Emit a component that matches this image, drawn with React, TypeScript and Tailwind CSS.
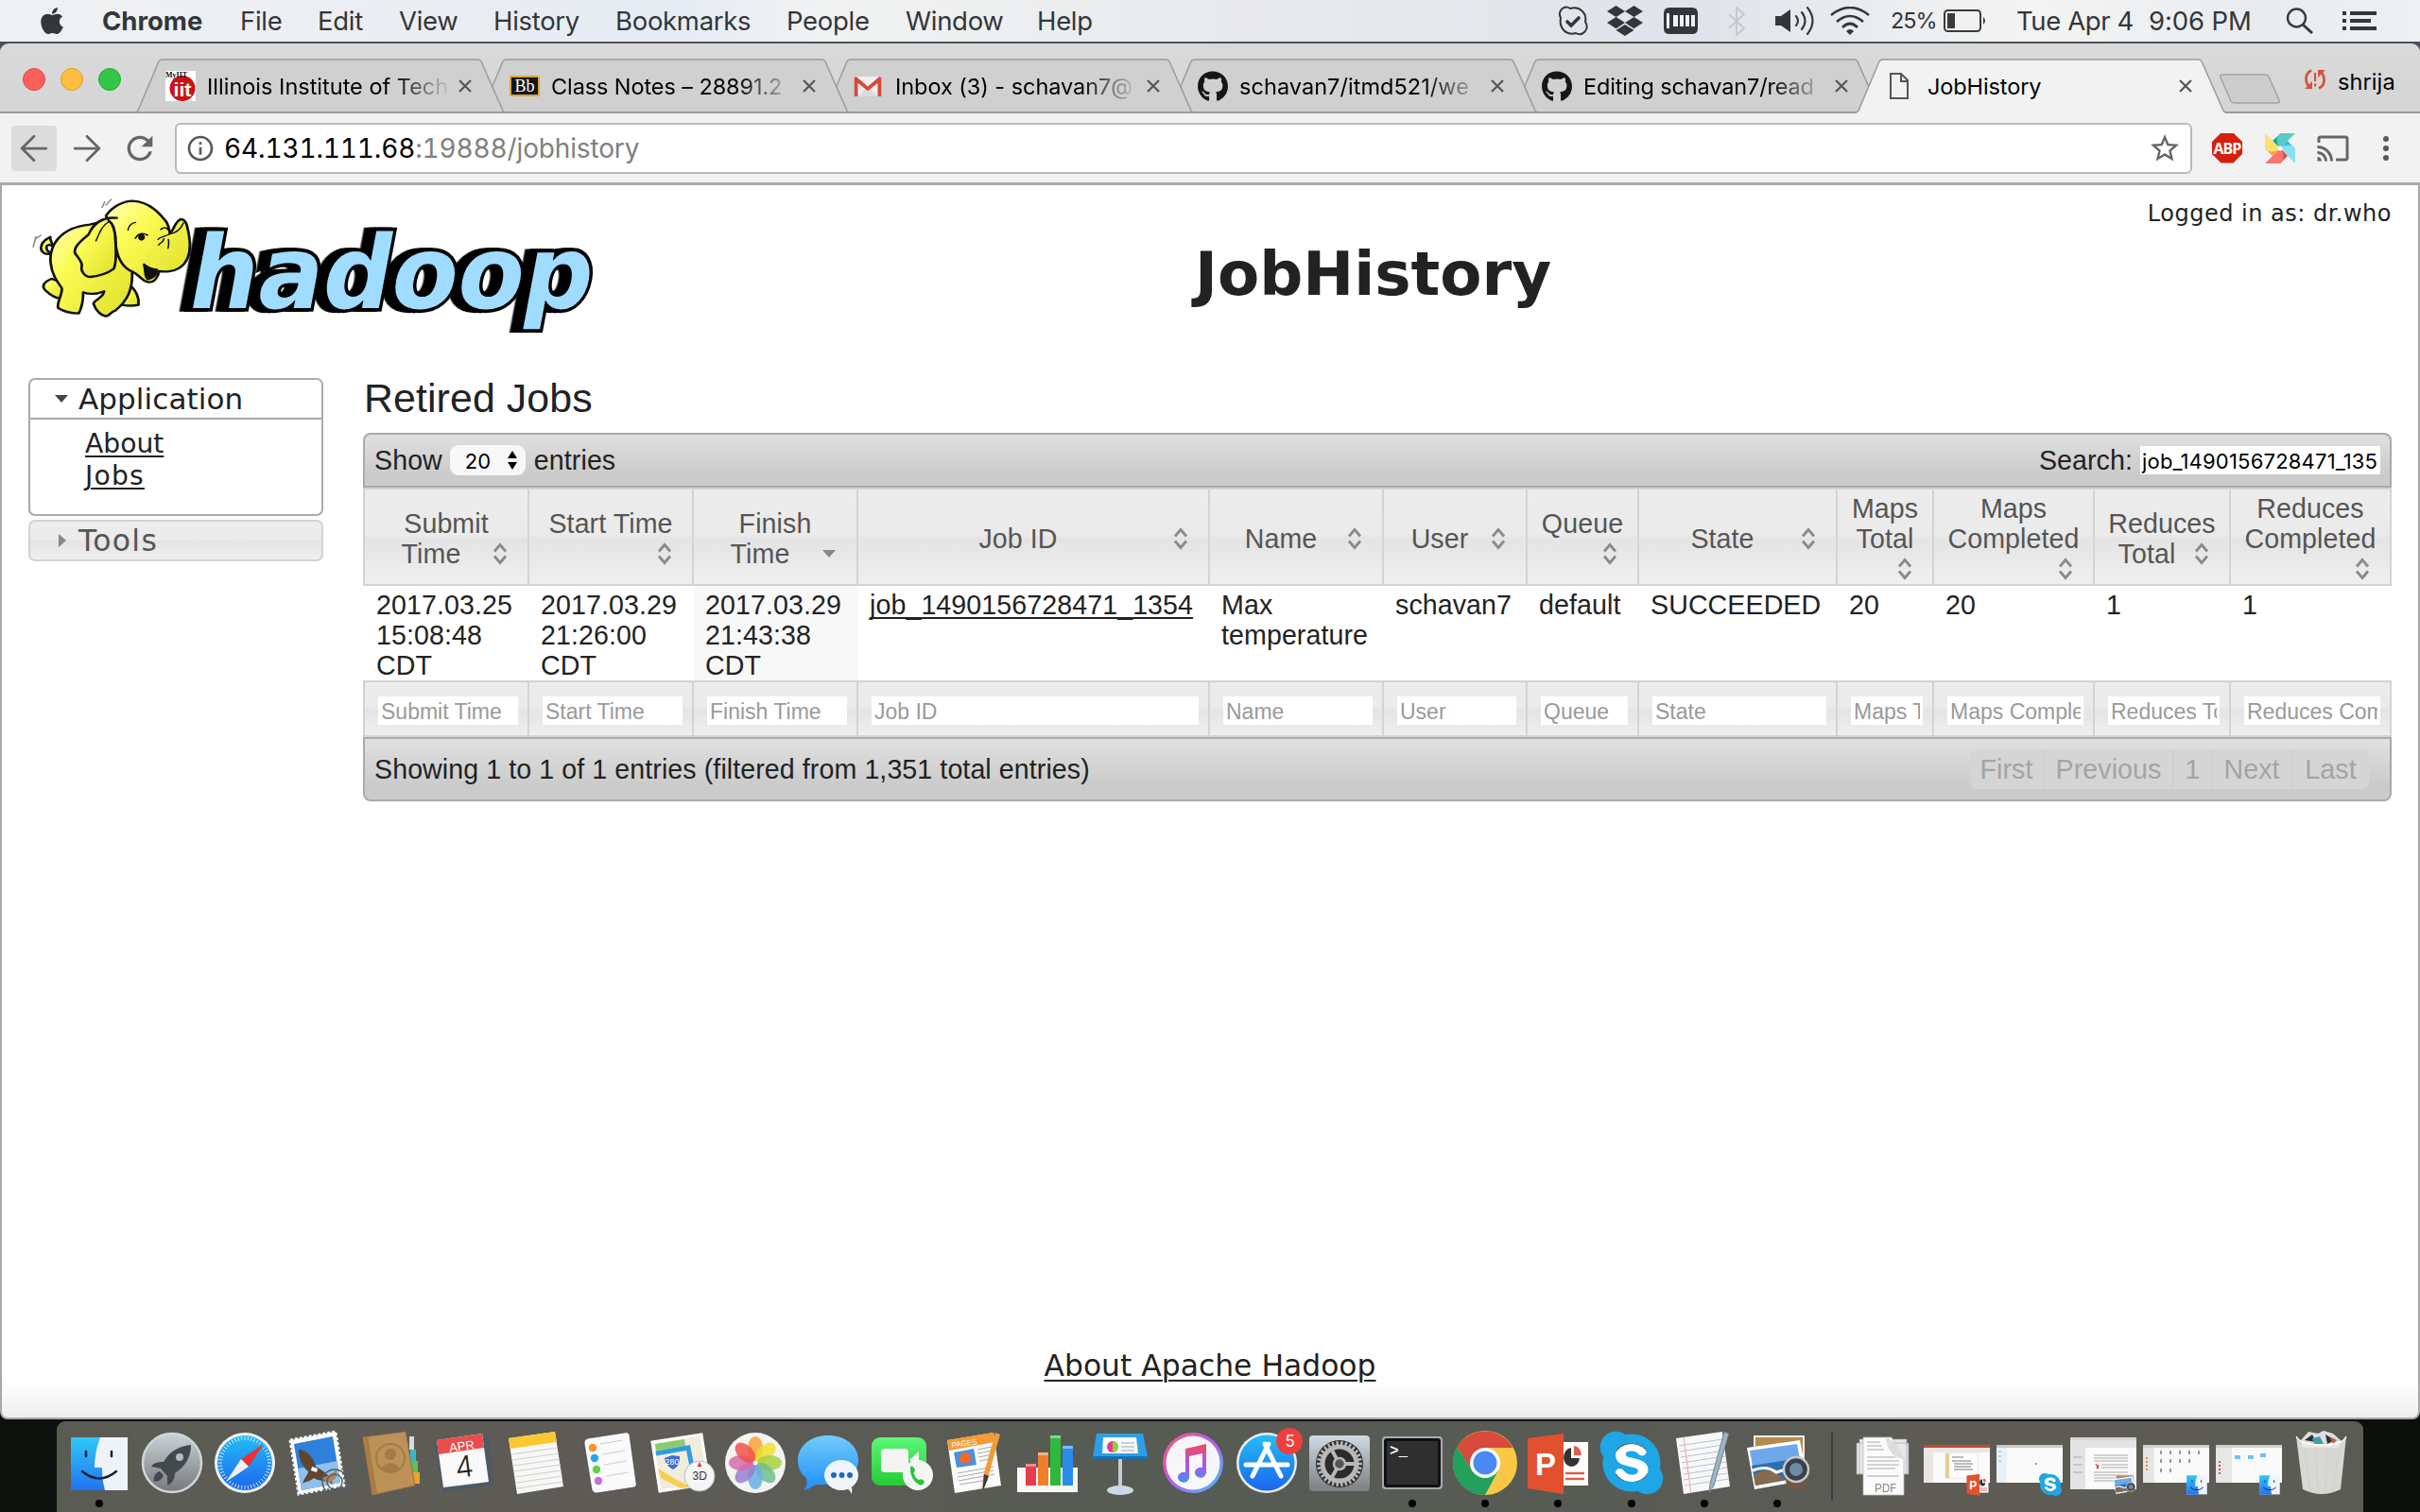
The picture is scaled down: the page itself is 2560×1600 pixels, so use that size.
import React from "react";
import { FaApple, FaDropbox, FaGithub, FaSkype } from "react-icons/fa";
import { MdCast, MdInfoOutline, MdRefresh, MdStarBorder } from "react-icons/md";
import { ArrowLeft, ArrowRight } from "lucide-react";

/* ---------- menu bar ---------- */

const menus: [string, string][] = [
  ["File", "w-[82px]"],
  ["Edit", "w-[86px]"],
  ["View", "w-[100px]"],
  ["History", "w-[129px]"],
  ["Bookmarks", "w-[181px]"],
  ["People", "w-[126px]"],
  ["Window", "w-[139px]"],
  ["Help", "w-[100px]"],
];

function MenuBar() {
  return (
    <header className="flex h-[44px] items-center bg-[linear-gradient(90deg,#f0f1f2_0%,#e9edf2_20%,#e6ecf4_28%,#f1f2f2_34%,#e9eaec_50%,#dfe4ea_70%,#f4f4f3_84%,#e9ecef_93%,#eef1f3_100%)] font-['Inter',sans-serif] text-[27.5px] leading-[44px] tracking-[-0.3px] text-[#33363a]">
      <FaApple className="ml-[40px] h-[32px] w-[30px]" />
      <div className="ml-[38px] w-[146px] font-bold tracking-[0px]">Chrome</div>
      {menus.map(([m, w]) => (
        <div key={m} className={w}>{m}</div>
      ))}
      <div className="ml-auto flex items-center">
        <svg viewBox="0 0 32 32" className="h-[32px] w-[32px]" fill="none" stroke="#33363a" strokeWidth="2">
          <path d="M3 13 C-1 5 7 -1 13 3 C23 0 31 8 29 17 C34 25 26 33 19 29 C9 32 1 24 3 13Z" />
          <path d="M10 17 l4 4 8 -8" strokeWidth="3.6" strokeLinecap="round" />
        </svg>
        <FaDropbox className="ml-[20px] h-[38px] w-[38px]" />
        <svg viewBox="0 0 36 28" className="ml-[22px] h-[28px] w-[36px]">
          <path d="M6 0 H30 Q36 0 36 6 V22 Q36 28 30 28 H6 Q0 28 0 22 V6 Q0 0 6 0Z" fill="#33363a" />
          <path d="M3 6 h3 v16 h-3z M10 8 h5 v12 h-5z M17 8 h4 v12 h-4z M23 8 h4 v12 h-4z M29 8 h4 v12 h-4z" fill="#eef0f2" />
        </svg>
        <svg viewBox="0 0 18 31" className="ml-[32px] h-[31px] w-[18px]" fill="none" stroke="#c3c7cb" strokeWidth="1.8">
          <path d="M1 8 L17 23 L9 30 V1 L17 8 L1 23" />
        </svg>
        <svg viewBox="0 0 42 32" className="ml-[32px] h-[32px] w-[42px]" fill="none" stroke="#33363a" strokeWidth="2.1" strokeLinecap="round">
          <path d="M0 11 h6 l10 -7 v24 l-10 -7 h-6z" fill="#33363a" stroke="none" />
          <path d="M22 11 q4 5 0 10 M28 7 q7 9 0 18 M34 2 q11 14 0 28" />
        </svg>
        <svg viewBox="0 0 42 30" className="ml-[16px] h-[30px] w-[42px]" fill="none" stroke="#33363a" strokeWidth="2.6">
          <path d="M1 9 Q21 -7 41 9 M7 16 Q21 4 35 16 M13 22 Q21 14 29 22" />
          <path d="M17 26 q4 -4 8 0 l-4 4z" fill="#33363a" stroke="none" />
        </svg>
        <span className="ml-[22px] w-[56px] text-[23.5px] tracking-[-1.1px]">25%</span>
        <svg viewBox="0 0 46 24" className="h-[24px] w-[46px]" fill="none" stroke="#3a3a3a" strokeWidth="2">
          <rect x="1" y="1" width="38" height="22" rx="3.5" />
          <path d="M42 8 q4 4 0 8z" fill="#3a3a3a" stroke="none" />
          <rect x="4" y="4" width="8" height="16" fill="#3a3a3a" stroke="none" />
        </svg>
        <span className="ml-[31px] w-[140px] tracking-[-0.4px]">Tue Apr 4</span>
        <span className="w-[145px] tracking-[-0.1px]">9:06 PM</span>
        <svg viewBox="0 0 30 28" className="h-[28px] w-[30px]" fill="none" stroke="#3a3a3a" strokeWidth="2.4">
          <circle cx="11.5" cy="11" r="9.5" />
          <path d="M18 18 L28 27" strokeWidth="3" />
        </svg>
        <svg viewBox="0 0 36 20" className="mr-[46px] ml-[30px] h-[20px] w-[36px]" fill="#33363a">
          <path d="M0 0h4v4h-4z M8 0h28v4h-28z M0 8h4v4h-4z M8 8h22v4h-22z M0 16h4v4h-4z M8 16h28v4h-28z" />
        </svg>
      </div>
    </header>
  );
}

/* ---------- browser chrome ---------- */

const IitIcon = (
  <svg viewBox="0 0 32 32" className="h-[32px] w-[32px]">
    <rect width="32" height="32" fill="#fff" />
    <circle cx="18" cy="18.5" r="13.5" fill="#cc1215" />
    <text x="0" y="7" fontSize="8" fontWeight="bold" fontFamily="Liberation Serif" fill="#111">MyIIT</text>
    <text x="8.5" y="27" fontSize="21" fontWeight="bold" fontFamily="Liberation Sans" fill="#fff" textLength="19" lengthAdjust="spacingAndGlyphs">iit</text>
  </svg>
);
const BbIcon = (
  <div className="flex h-[22px] w-[32px] items-center justify-center rounded-[2px] border-2 border-[#d9a92c] bg-[#151515] font-['Liberation_Serif',serif] text-[18px] leading-[16px] text-white">Bb</div>
);
const GmailIcon = (
  <svg viewBox="0 0 30 22" className="h-[21px] w-[30px]">
    <rect width="30" height="22" rx="1" fill="#f0f0f0" />
    <path d="M4 22 L15 11 L26 22z" fill="#dcdcdc" />
    <path d="M0 22 V1 L2 0 L15 11 L28 0 L30 1 V22 H26 V7 L15 16 L4 7 V22z" fill="#d9473a" />
  </svg>
);
const PageIcon = (
  <svg viewBox="0 0 20 28" className="h-[28px] w-[20px]" fill="none" stroke="#555" strokeWidth="2">
    <path d="M1 1 H12 L19 8 V27 H1z M12 1 V9 H19" />
  </svg>
);

const tabs: { title: string; icon: React.ReactNode; active?: boolean; z: string; tracking: string }[] = [
  { title: "Illinois Institute of Tech", icon: IitIcon, z: "z-[5]", tracking: "tracking-[0px]" },
  { title: "Class Notes – 28891.2", icon: BbIcon, z: "z-[4]", tracking: "tracking-[-0.1px]" },
  { title: "Inbox (3) - schavan7@", icon: GmailIcon, z: "z-[3]", tracking: "tracking-[-0.05px]" },
  { title: "schavan7/itmd521/we", icon: <FaGithub className="h-[33px] w-[32px] text-[#161616]" />, z: "z-[2]", tracking: "tracking-[0.05px]" },
  { title: "Editing schavan7/read", icon: <FaGithub className="h-[33px] w-[32px] text-[#161616]" />, z: "z-[1]", tracking: "tracking-[-0.15px]" },
  { title: "JobHistory", icon: PageIcon, active: true, z: "z-[6]", tracking: "tracking-[-0.1px]" },
];

function TabStrip() {
  return (
    <div className="relative flex h-[74px] items-end rounded-t-[9px] border-b-2 border-[#9b9b9b] bg-[linear-gradient(180deg,#dadada,#d5d5d5)] font-['Inter',sans-serif]">
      <div className="mb-[22px] ml-[24px] flex w-[120px] gap-[16px]">
        <span className="h-[24px] w-[24px] rounded-full border border-[#e2463f] bg-[#fc605b]" />
        <span className="h-[24px] w-[24px] rounded-full border border-[#dfa023] bg-[#fdbd40]" />
        <span className="h-[24px] w-[24px] rounded-full border border-[#1fa72e] bg-[#33c748]" />
      </div>
      {tabs.map((t) => (
        <div key={t.title} className={`relative mr-[-26px] mb-[-2px] flex h-[58px] w-[390px] shrink-0 items-center ${t.z}`}>
          <svg viewBox="0 0 390 58" className="absolute inset-0 h-[58px] w-[390px]">
            <path
              d="M0 57 L2 55 L24 3 Q25 1 28 1 H361 Q364 1 365 3 L388 55 L390 57 V58 H0z"
              fill={t.active ? "#f2f2f2" : "#d0d0d0"}
            />
            <path d="M0 57 L2 55 L24 3 Q25 1 28 1 H361 Q364 1 365 3 L388 55 L390 57" fill="none" stroke="#9b9b9b" strokeWidth="1.5" />
            {!t.active && <path d="M0 57 H390" stroke="#9b9b9b" strokeWidth="2" />}
          </svg>
          <div className="relative ml-[31px] flex w-[44px] items-center">
            {t.active ? <span className="ml-[4px]">{t.icon}</span> : t.icon}
          </div>
          <div
            className={
              t.active
                ? `relative w-[258px] pt-[1px] text-[23.5px] leading-[32px] whitespace-nowrap text-black ${t.tracking}`
                : `relative w-[258px] pt-[1px] text-[23.5px] leading-[32px] whitespace-nowrap text-black [mask-image:linear-gradient(90deg,#000_76%,transparent_100%)] ${t.tracking}`
            }
          >
            {t.title}
          </div>
          <svg viewBox="0 0 14 14" className="relative ml-[8px] h-[14px] w-[14px]" stroke="#555" strokeWidth="2.2">
            <path d="M1 1 L13 13 M13 1 L1 13" />
          </svg>
        </div>
      ))}
      <svg viewBox="0 0 66 32" className="mb-[8px] ml-[19px] h-[32px] w-[66px]">
        <path d="M4 1 H49 Q52 1 53 3 L64 28 Q65 31 62 31 H17 Q14 31 13 29 L2 4 Q1 1 4 1z" fill="#cdcdcd" stroke="#a2a2a2" strokeWidth="1.5" />
      </svg>
      <svg viewBox="0 0 24 22" className="mb-[23px] ml-[24px] h-[22px] w-[24px]" fill="none" stroke="#d5533f" strokeWidth="2.8">
        <path d="M8 1.5 C1 5 1 14 6 19 M16 20.5 C23 17 23 8 18 3" />
        <path d="M1 21 h8 v-8z M23 1 h-8 v8z" fill="#d5533f" stroke="none" />
        <path d="M12 4 v9 M12 15.5 v3" strokeWidth="2.2" />
      </svg>
      <span className="mb-[15px] ml-[12px] text-[23.5px] leading-[32px] tracking-[0.1px] text-black">shrija</span>
    </div>
  );
}

function Pinwheel() {
  return (
    <svg viewBox="0 0 32 32" className="h-[32px] w-[32px]">
      <path d="M16 16 L8 8 L17 0z" fill="#12a398" />
      <path d="M32 0 L16 0 C10 6 13 12 16 16z" fill="#55cdc0" />
      <path d="M16 16 L24 8 L32 17z" fill="#2cbfe0" />
      <path d="M32 32 V16 C26 10 20 13 16 16z" fill="#85e2f4" />
      <path d="M16 16 L24 24 L16 32z" fill="#e8443f" />
      <path d="M0 32 L16 32 C22 26 19 20 16 16z" fill="#fd7570" />
      <path d="M16 16 L8 24 L0 16z" fill="#fba23f" />
      <path d="M0 0 V16 C6 22 12 19 16 16z" fill="#fbe06c" />
      <circle cx="16" cy="16" r="2.5" fill="#fff" />
    </svg>
  );
}

function Toolbar() {
  return (
    <div className="flex h-[76px] items-center border-b-[3px] border-[#a9a9a9] bg-[#f2f2f2] text-[#666]">
      <div className="ml-[12px] flex h-[48px] w-[48px] items-center justify-center rounded-[4px] bg-[#dcdcdc]">
        <ArrowLeft size={44} strokeWidth={1.5} />
      </div>
      <ArrowRight size={44} strokeWidth={1.5} className="ml-[10px]" />
      <MdRefresh className="ml-[14px] h-[40px] w-[40px]" />
      <div className="ml-[17px] flex h-[54px] w-[2134px] items-center rounded-[6px] border-2 border-[#b9b9b9] bg-white">
        <MdInfoOutline className="ml-[9px] h-[32px] w-[32px] text-[#5a5a5a]" />
        <div className="ml-[9px] font-['Inter',sans-serif] text-[28px] leading-[50px] tracking-[-0.15px] text-[#808080] tabular-nums">
          <span className="text-black">64.131.111.68</span>:19888/jobhistory
        </div>
        <MdStarBorder className="mr-[9px] ml-auto h-[36px] w-[36px] text-[#666]" />
      </div>
      <div className="ml-[21px] flex h-[32px] w-[32px] items-center justify-center bg-[#d71f10] font-['Open_Sans',sans-serif] text-[16px] font-bold tracking-[-1px] text-white [clip-path:polygon(30%_0,70%_0,100%_30%,100%_70%,70%_100%,30%_100%,0_70%,0_30%)]">
        ABP
      </div>
      <div className="ml-[24px]">
        <Pinwheel />
      </div>
      <MdCast className="ml-[22px] h-[36px] w-[36px]" />
      <div className="ml-[35px] flex flex-col gap-[4px]">
        <span className="h-[6px] w-[6px] rounded-full bg-[#5a5a5a]" />
        <span className="h-[6px] w-[6px] rounded-full bg-[#5a5a5a]" />
        <span className="h-[6px] w-[6px] rounded-full bg-[#5a5a5a]" />
      </div>
    </div>
  );
}

/* ---------- hadoop page ---------- */

function HadoopLogo() {
  return (
    <svg viewBox="0 0 1568 480" preserveAspectRatio="none" className="h-[160px] w-[620px]">
      <defs>
        <linearGradient id="ele" x1="0" y1="0" x2="1" y2="1">
          <stop offset="0" stopColor="#ffffc0" />
          <stop offset="0.35" stopColor="#fbfb55" />
          <stop offset="1" stopColor="#dede28" />
        </linearGradient>
      </defs>
      <g className="[filter:drop-shadow(-14px_0_0_#000)_drop-shadow(-12px_0_0_#000)]">
        <text
          x="444"
          y="0"
          transform="translate(0 378) skewX(-9)"
          fontFamily="DejaVu Sans"
          fontWeight="bold"
          fontSize="322"
          textLength="1078"
          lengthAdjust="spacingAndGlyphs"
          fill="#9fdcff"
          stroke="#000"
          strokeWidth="22"
          className="[paint-order:stroke]"
        >
          hadoop
        </text>
      </g>
      <g stroke="#111" strokeWidth="7" fill="url(#ele)" strokeLinejoin="round" strokeLinecap="round">
        <path d="M90 205 C52 215 48 172 84 152 C82 165 92 170 88 180 C78 172 68 182 78 198z" />
        <path d="M88 285 C66 295 58 310 74 325 C85 338 98 346 112 348 L120 300z" />
        <path d="M290 300 C316 320 322 348 320 368 C305 372 290 371 276 368z" />
        <path d="M190 113 C110 122 80 180 85 235 C88 270 100 290 115 315 C116 340 100 360 105 378 C122 390 145 395 160 395 C168 378 172 350 172 328 C190 336 210 333 228 325 C228 345 195 356 200 365 C205 385 220 403 234 404 C246 398 246 390 258 386 C290 355 305 320 303 262 L235 100z" />
        <path d="M233 85 C250 55 280 38 305 38 C350 40 378 80 395 105 C402 120 402 130 404 142 C415 130 416 106 432 96 C447 95 450 115 454 140 C462 190 456 230 430 250 C415 262 390 264 375 261 C372 282 362 297 346 296 C322 290 332 276 296 258 C270 240 258 200 258 150z" />
        <path d="M335 240 C345 250 356 255 369 256 C368 272 360 282 345 286 C336 278 340 262 335 240z" fill="#111" />
        <path d="M262 92 C225 88 200 108 186 145 C165 165 146 185 150 203 C156 216 172 232 168 246 C165 258 175 280 192 279 C215 276 240 265 254 253 C262 230 260 190 258 160 C258 130 250 108 240 100" />
        <path d="M240 105 C222 115 216 140 206 165 M292 130 C294 116 302 108 312 106 M372 160 C380 150 396 150 404 142 M388 158 C386 170 376 172 374 178 M400 160 Q402 175 399 188 M404 142 C420 140 432 130 440 108" fill="none" strokeWidth="4" />
        <path d="M312 156 Q322 134 344 146 M380 128 Q392 118 398 128" fill="none" strokeWidth="5" />
        <ellipse cx="328" cy="153" rx="8" ry="10" fill="#111" strokeWidth="2" />
      </g>
      <path d="M46 150 L38 185 M60 146 L44 158 M222 60 L230 40 M232 52 L248 32" stroke="#888" strokeWidth="4" fill="none" />
    </svg>
  );
}

function Sidebar() {
  return (
    <nav className="ml-[28px] w-[312px] pt-[40px] font-['DejaVu_Sans',sans-serif] text-[#222]">
      <div className="h-[146px] rounded-[7px] border-2 border-[#aaaaaa] bg-white">
        <div className="flex h-[42px] items-center border-b-2 border-[#aaaaaa] text-[31px] leading-[40px]">
          <svg viewBox="0 0 14 8" className="ml-[26px] h-[8px] w-[14px]"><path d="M0 0h14l-7 8z" fill="#454545" /></svg>
          <span className="ml-[11px] tracking-[0.1px]">Application</span>
        </div>
        <div className="flex flex-col items-start pt-[9px] pl-[58px] text-[28.2px] leading-[34px]">
          <a className="underline decoration-2 underline-offset-[3px]">About</a>
          <a className="tracking-[1.2px] underline decoration-2 underline-offset-[3px]">Jobs</a>
        </div>
      </div>
      <div className="mt-[4px] flex h-[44px] items-center rounded-[7px] border-2 border-[#d3d3d3] bg-[linear-gradient(180deg,#ececec_0%,#ebebeb_48%,#e4e4e4_52%,#efefef_100%)] text-[31.5px] leading-[40px] text-[#555]">
        <svg viewBox="0 0 8 14" className="ml-[30px] h-[14px] w-[8px]"><path d="M0 0l8 7l-8 7z" fill="#888" /></svg>
        <span className="ml-[13px] tracking-[1.3px]">Tools</span>
      </div>
    </nav>
  );
}

type Col = { label: string; head?: React.ReactNode; w: string; sorted?: boolean; value: React.ReactNode };

const cols: Col[] = [
  { label: "Submit Time", w: "w-[176px]", value: "2017.03.25 15:08:48 CDT" },
  { label: "Start Time", w: "w-[174px]", value: "2017.03.29 21:26:00 CDT" },
  { label: "Finish Time", head: <>Finish<br />Time</>, w: "w-[174px]", sorted: true, value: "2017.03.29 21:43:38 CDT" },
  { label: "Job ID", w: "w-[372px]", value: <span className="underline decoration-2 underline-offset-[3px] [text-decoration-skip-ink:none]">job_1490156728471_1354</span> },
  { label: "Name", w: "w-[184px]", value: "Max temperature" },
  { label: "User", w: "w-[152px]", value: "schavan7" },
  { label: "Queue", w: "w-[118px]", value: "default" },
  { label: "State", w: "w-[210px]", value: "SUCCEEDED" },
  { label: "Maps Total", w: "w-[102px]", value: "20" },
  { label: "Maps Completed", w: "w-[170px]", value: "20" },
  { label: "Reduces Total", w: "w-[144px]", value: "1" },
  { label: "Reduces Completed", w: "w-[170px]", value: "1" },
];

function SortIcon({ sorted }: { sorted?: boolean }) {
  return (
    <svg viewBox="0 0 32 32" className="float-right h-[32px] w-[32px]" fill="none" stroke="#8a8a8a" strokeWidth="2.8">
      {sorted ? (
        <path d="M8 12h14l-7 8z" fill="#888" stroke="none" />
      ) : (
        <path d="M9 13.5 L15 6.5 L21 13.5 M9 18.5 L15 25.5 L21 18.5" />
      )}
    </svg>
  );
}

const glass = "bg-[linear-gradient(180deg,#ececec_0%,#ebebeb_47%,#e4e4e4_53%,#f0f0f0_100%)]";

function JobsTable() {
  return (
    <table className="w-[2146px] table-fixed border-separate border-spacing-0 text-[28.6px] leading-[32px] tracking-[0.08px]">
      <thead>
        <tr className={glass}>
          {cols.map((c, i) => (
            <th
              key={c.label}
              className={`${c.w} ${i === 0 ? "border-l-2" : ""} h-[104px] border-y-2 border-r-2 border-[#d3d3d3] p-0 pt-[4px] pr-[12px] pl-[12px] text-center align-middle font-normal text-[#555]`}
            >
              {c.head ?? c.label}
              <SortIcon sorted={c.sorted} />
            </th>
          ))}
        </tr>
      </thead>
      <tbody>
        <tr>
          {cols.map((c, i) => (
            <td
              key={c.label}
              className={`h-[100px] p-0 pt-[4px] align-top text-[#222] ${i === 0 ? "pl-[14px]" : "pl-[12px]"} ${c.sorted ? "bg-[#f8f8f8]" : "bg-white"}`}
            >
              {c.value}
            </td>
          ))}
        </tr>
      </tbody>
      <tfoot>
        <tr className={glass}>
          {cols.map((c, i) => (
            <th
              key={c.label}
              className={`${i === 0 ? "border-l-2" : ""} h-[60px] border-y-2 border-r-2 border-[#d3d3d3] p-0 pt-[4px] pr-[10px] pl-[14px] align-middle font-normal`}
            >
              <div className="h-[30px] overflow-hidden bg-white px-[3px] text-left text-[23px] leading-[32px] tracking-[0px] whitespace-nowrap text-[#9a9a9a]">
                <div className="overflow-hidden">{c.label}</div>
              </div>
            </th>
          ))}
        </tr>
      </tfoot>
    </table>
  );
}

function Page() {
  return (
    <main className="flex h-[1306px] flex-col rounded-b-[8px] border-x-2 border-b-2 border-[#a8a8a8] bg-[linear-gradient(180deg,#fff_0%,#fff_97%,#eeeeee_100%)]">
      <div className="flex h-[164px]">
        <div className="ml-[18px] w-[620px] pt-[4px]">
          <HadoopLogo />
        </div>
        <h1 className="ml-[624px] w-[400px] pt-[52px] font-['DejaVu_Sans',sans-serif] text-[64.4px] leading-[84px] font-bold text-[#222]">JobHistory</h1>
        <div className="mr-[28px] ml-auto pt-[15px] font-['DejaVu_Sans',sans-serif] text-[24px] leading-[30px] tracking-[0.5px] whitespace-nowrap text-[#222]">
          Logged in as: dr.who
        </div>
      </div>
      <div className="flex">
        <Sidebar />
        <section className="ml-[42px] w-[2146px] font-['Liberation_Sans',sans-serif] text-[28.6px] tracking-[0.08px] text-[#222]">
          <h2 className="h-[98px] pt-[36px] pl-[1px] text-[42.9px] leading-[50px]">Retired Jobs</h2>
          <div className="flex h-[58px] items-center rounded-t-[8px] border-2 border-[#aaaaaa] bg-[linear-gradient(180deg,#e0e0e0,#cacaca_80%,#cccccc)] leading-[32px]">
            <span className="ml-[10px]">Show</span>
            <div className="ml-[8px] flex h-[32px] w-[80px] items-center rounded-[9px] bg-[#f8f8f8] font-['Inter',sans-serif] text-[22px] text-black">
              <span className="ml-[16px] w-[45px] pt-[1px]">20</span>
              <svg viewBox="0 0 10 20" className="h-[20px] w-[10px]"><path d="M0 8L5 0l5 8z M0 12L5 20l5-8z" /></svg>
            </div>
            <span className="ml-[9px]">entries</span>
            <span className="mr-[8px] ml-auto">Search:</span>
            <div className="mr-[10px] h-[30px] w-[254px] overflow-hidden bg-white pl-[2px] font-['Inter',sans-serif] text-[22px] leading-[32px] tracking-[0.2px] whitespace-nowrap text-black">
              job_1490156728471_135
            </div>
          </div>
          <JobsTable />
          <div className="flex h-[68px] items-center rounded-b-[8px] border-2 border-[#aaaaaa] bg-[linear-gradient(180deg,#e0e0e0,#cacaca_80%,#cccccc)] leading-[32px]">
            <span className="ml-[10px]">Showing 1 to 1 of 1 entries (filtered from 1,351 total entries)</span>
            <div className="mr-[22px] ml-auto flex h-[42px] items-center overflow-hidden rounded-[7px] bg-[#d5d5d5] leading-[42px] text-[#a4a4a4]">
              <span className="w-[79px] border-r-2 border-[#d0d0d0] text-center">First</span>
              <span className="w-[137px] border-r-2 border-[#d0d0d0] text-center">Previous</span>
              <span className="w-[41px] border-r-2 border-[#d0d0d0] text-center">1</span>
              <span className="w-[84px] border-r-2 border-[#d0d0d0] text-center">Next</span>
              <span className="w-[81px] text-center">Last</span>
            </div>
          </div>
        </section>
      </div>
      <footer className="mt-auto mb-[35px] flex justify-center font-['DejaVu_Sans',sans-serif] text-[31.4px] leading-[40px] text-[#222]">
        <a className="underline decoration-2 underline-offset-[4px]">About Apache Hadoop</a>
      </footer>
    </main>
  );
}

/* ---------- dock ---------- */

const box = "h-[72px] w-[72px] overflow-visible";

const FinderFace = (
  <>
    <path d="M6 9 H66 V65 H6z" fill="#eef3fa" />
    <path d="M6 9 H37 C33 20 31 30 31 41 H39 C39 50 40 58 42 65 H6z" fill="url(#gFinder)" />
    <path d="M22 24 v5 M49 24 v5" stroke="#123" strokeWidth="2.5" strokeLinecap="round" />
    <path d="M18 45 Q36 60 54 45" fill="none" stroke="#123" strokeWidth="2.5" strokeLinecap="round" />
  </>
);

const PptFace = (
  <>
    <path d="M40 14 H68 V60 H40z" fill="#fff" />
    <path d="M50 20 a8.500 10 0 1 0 9 11 h-9z" fill="#333" />
    <path d="M53 18 a8 10 0 0 1 8 10 h-8z" fill="#d9604a" />
    <path d="M44 47 h20 M44 53 h20" stroke="#d9604a" strokeWidth="2.5" />
    <path d="M4 10 L42 5 V69 L4 63z" fill="#e2512f" />
    <text x="12" y="49" fontSize="33" fontWeight="bold" fontFamily="Liberation Sans" fill="#fff">P</text>
  </>
);

const SkypeFace = (
  <g>
    <circle cx="36" cy="36" r="20" fill="#fff" />
    <svg x="-2" y="-2" width="76" height="76" viewBox="0 0 76 76">
      <FaSkype size={76} color="#1ea7e4" />
    </svg>
  </g>
);

const PreviewFace = (
  <>
    <path d="M12 8 H64 V40 H12z" fill="#b58a4a" stroke="#eee" strokeWidth="2" />
    <path d="M4 20 L60 12 L68 54 L12 64z" fill="#fff" />
    <path d="M7 23 L57 16 L60 32 L10 40z" fill="#6ba9ea" />
    <path d="M9 39 L60 31 L65 51 L13 60z" fill="#2f6eae" />
    <path d="M11 48 L30 42 L44 54 L13 60z" fill="#8a6a4c" />
    <path d="M10 44 q15 -6 25 2 q10 -4 18 -2" stroke="#fff" strokeWidth="3" fill="none" />
    <path d="M44 44 L69 44 L69 62 Q57 70 46 62z" fill="#6b5846" />
    <circle cx="56" cy="43" r="13" fill="#3a4148" stroke="#c9c9c9" strokeWidth="2.5" />
    <circle cx="56" cy="43" r="7" fill="#6c8aa5" />
  </>
);

function ticks(n: number, r1: number, r2: number) {
  return Array.from({ length: n }, (_, i) => {
    const a = (i / n) * Math.PI * 2;
    return `M${36 + Math.cos(a) * r1} ${36 + Math.sin(a) * r1}L${36 + Math.cos(a) * r2} ${36 + Math.sin(a) * r2}`;
  }).join("");
}

const petals = ["#f9a134", "#f0df2f", "#a9d143", "#6cc08b", "#6aaee4", "#9a7fd0", "#d66aa8", "#f0524a"];

const apps: { name: string; running?: boolean; art: React.ReactNode }[] = [
  { name: "finder", running: true, art: FinderFace },
  {
    name: "launchpad",
    art: (
      <>
        <circle cx="36" cy="36" r="31" fill="url(#gLaunch)" stroke="#cfd6da" strokeWidth="2.5" />
        <path d="M56 17 C42 18 32 26 27 35 C21 35 16 36 14 40 L24 42 L31 50 L31 60 C36 58 39 53 39 47 C50 40 56 30 56 17z M23 45 C18 46 16 51 17 56 C22 56 26 53 27 49z" fill="#44494e" />
        <circle cx="44" cy="30" r="4" fill="#b4bcc1" />
      </>
    ),
  },
  {
    name: "safari",
    art: (
      <>
        <circle cx="36" cy="36" r="32" fill="#f3f4f5" />
        <circle cx="36" cy="36" r="29" fill="url(#gBlue)" />
        <path d={ticks(48, 24, 28)} stroke="#d6efff" strokeWidth="1" />
        <path d="M56 16 L40 40 L32 32z" fill="#ee3030" />
        <path d="M16 56 L40 40 L32 32z" fill="#f2f2f2" />
      </>
    ),
  },
  {
    name: "mail",
    art: (
      <>
        <path d="M7 12 L55 3 L64 60 L16 69z" fill="#fff" stroke="#fff" strokeWidth="3" strokeDasharray="3 2" />
        <path d="M11 16 L52 8 L60 57 L19 65z" fill="#2f7fdc" />
        <path d="M15 42 L57 34 L60 57 L19 65z" fill="#8fc0ee" />
        <path d="M16 22 C24 22 32 30 34 40 C42 44 50 50 52 58 C44 54 38 56 32 52 C28 56 22 56 20 58 C22 52 26 48 26 45 C20 40 15 30 16 22z" fill="#5f4630" />
        <path d="M30 40 l6 2 l-1 4 l-6 -2z" fill="#fff" />
        <path d="M40 52 C48 50 54 46 56 42 C58 50 54 56 46 57z" fill="#b08458" />
        <circle cx="54" cy="56" r="13" fill="none" stroke="#50606a" strokeWidth="1.5" />
        <circle cx="54" cy="56" r="8" fill="none" stroke="#50606a" strokeWidth="1.5" />
      </>
    ),
  },
  {
    name: "contacts",
    art: (
      <>
        <path d="M56 8 h5 v14 h-5z" fill="#d8dadb" /><path d="M57 22 h6 v12 h-6z" fill="#3bb6c9" /><path d="M58 34 h7 v12 h-7z" fill="#58c35b" /><path d="M58 46 h9 v12 h-9z" fill="#eda42d" />
        <path d="M7 9 L52 3 L62 60 L17 70z" fill="#bd9158" stroke="#9a7140" strokeWidth="1" />
        <path d="M7 9 L12 8 L22 68 L17 70z" fill="#a87d45" />
        <circle cx="36" cy="31" r="15" fill="none" stroke="#a27b47" strokeWidth="2" />
        <circle cx="36" cy="27" r="6" fill="#a27b47" /><path d="M26 42 q10 -12 20 0 q-10 7 -20 0z" fill="#a27b47" />
      </>
    ),
  },
  {
    name: "calendar",
    art: (
      <>
        <path d="M4 16 L62 8 L67 58 L14 67z" fill="#4c5a66" />
        <path d="M7 12 L55 5 L62 56 L14 62z" fill="#fafafa" />
        <path d="M7 12 L55 5 L57 20 L9 27z" fill="#ea4d4b" />
        <text x="20" y="23" fontSize="13" fontFamily="Liberation Sans" fill="#fff" transform="rotate(-7 32 18)">APR</text>
        <text x="27" y="51" fontSize="31" fontFamily="Inter" fontWeight="300" fill="#222" transform="rotate(-7 36 45)">4</text>
      </>
    ),
  },
  {
    name: "notes",
    art: (
      <>
        <path d="M6 10 L55 3 L64 61 L15 69z" fill="#f7f7f5" />
        <path d="M6 10 L55 3 L57 14 L8 21z" fill="#fbc92f" />
        <path d="M9 27 L58 20 M10 33 L59 26 M11 39 L60 32 M12 45 L61 38 M13 51 L62 44 M14 57 L63 50 M15 63 L63 56" stroke="#cfcfcf" strokeWidth="1.2" />
      </>
    ),
  },
  {
    name: "reminders",
    art: (
      <>
        <path d="M13 10 L52 4 Q56 3 57 7 L64 57 Q65 61 61 62 L22 68 Q18 68 17 64 L9 15 Q9 11 13 10z" fill="#fafafa" stroke="#3a3a3a" strokeWidth=".6" />
        <path d="M26 16 L50 12 M28 27 L52 23 M30 38 L54 34 M32 50 L56 46" stroke="#cfcfcf" strokeWidth="1.2" />
        <circle cx="18" cy="20" r="4.2" fill="#fb9228" /><circle cx="20" cy="31" r="4.2" fill="#28a5f2" /><circle cx="22" cy="43" r="4.2" fill="#60d247" /><circle cx="24" cy="55" r="4.2" fill="#c56fdd" />
      </>
    ),
  },
  {
    name: "maps",
    art: (
      <>
        <path d="M4 14 L56 6 L64 58 L12 66z" fill="#f2ecdc" stroke="#fff" strokeWidth="3" />
        <path d="M7 16 L38 11 L39 18 L8 23z" fill="#8acb6c" />
        <path d="M8 26 L42 20 L48 50" fill="none" stroke="#2f9de0" strokeWidth="5" />
        <path d="M10 42 L30 54 L46 62 L34 63 L13 52z" fill="#f6cf52" />
        <path d="M17 31 l8 -3 l8 1 q1 10 -7 14 q-8 -4 -9 -12z" fill="#3a6fd0" />
        <text x="17.500" y="38" fontSize="9" fontFamily="Liberation Sans" fill="#fff">280</text>
        <circle cx="54" cy="50" r="16" fill="#f5f5f5" stroke="#bbb" strokeWidth="1" />
        <text x="46.500" y="54" fontSize="12" fontFamily="Liberation Sans" fill="#333">3D</text>
        <path d="M51.500 40 L54 35 L56.500 40z" fill="#e33" />
      </>
    ),
  },
  {
    name: "photos",
    art: (
      <>
        <circle cx="36" cy="36" r="32" fill="#f4f4f4" />
        {petals.map((c, i) => (
          <ellipse key={c} cx="36" cy="21" rx="8" ry="13" fill={c} opacity=".85" transform={`rotate(${i * 45} 36 36)`} />
        ))}
        <circle cx="36" cy="36" r="2" fill="#fff" />
      </>
    ),
  },
  {
    name: "messages",
    art: (
      <>
        <path d="M36 7 C54 7 68 18 68 33 C68 48 54 59 36 59 C28 59 22 58 18 62 Q14 65 10 65 Q15 60 13 52 C7 48 4 41 4 33 C4 18 18 7 36 7z" fill="url(#gMsg)" />
        <ellipse cx="50" cy="49" rx="18" ry="16" fill="#eef5fb" /><path d="M54 62 q5 2 7 7 q1 -6 -1 -9z" fill="#eef5fb" />
        <circle cx="42" cy="49" r="3" fill="#1a6db8" /><circle cx="50.5" cy="49" r="3" fill="#1a6db8" /><circle cx="59" cy="49" r="3" fill="#1a6db8" />
      </>
    ),
  },
  {
    name: "facetime",
    art: (
      <>
        <rect x="4" y="9" width="58" height="51" rx="9" fill="url(#gGreen)" />
        <rect x="14" y="21" width="29" height="25" rx="4" fill="#f4f4f4" /><path d="M44 33 L54 24 V44z" fill="#f4f4f4" />
        <circle cx="53" cy="49" r="16" fill="#f4f6f4" />
        <path d="M45 40 q3 -2 5 4 q-2 3 -1 4 q2 5 5 6 q4 -2 6 2 q-2 5 -6 3 q-10 -6 -9 -19z" fill="#29c33c" />
      </>
    ),
  },
  {
    name: "pages",
    art: (
      <>
        <path d="M7 12 L56 4 L64 60 L15 68z" fill="#fbfbfb" />
        <path d="M7 12 L56 4 L57 14 L9 23z" fill="#f59a35" />
        <text x="12" y="20" fontSize="8" fontFamily="Liberation Sans" fill="#fff" transform="rotate(-8 12 20)">PAGES</text>
        <path d="M14 25 L35 21 L38 38 L17 41z" fill="#4a90dc" /><circle cx="26" cy="31" r="6" fill="#ef6a2b" />
        <path d="M39 22 L54 19 M39 26 L54 23 M40 30 L55 27 M41 34 L56 31 M18 47 L56 40 M18 51 L56 44 M19 55 L57 48 M20 59 L50 54" stroke="#aaa" strokeWidth="1" />
        <path d="M58 4 L63 6 L50 52 L44 68 L45 50z" fill="#ee9d3a" /><path d="M46 48 L51 50 L44 68z" fill="#3a3a3a" />
      </>
    ),
  },
  {
    name: "numbers",
    art: (
      <>
        <path d="M4 41 H68 V67 H4z" fill="#f8f8f8" />
        <path d="M13 37 h11 v23 h-11z" fill="#e63d4d" /><path d="M26 25 h11 v35 h-11z" fill="#ef7f2a" /><path d="M39 7 h11 v53 h-11z" fill="#2fb93c" /><path d="M52 18 h11 v42 h-11z" fill="#2a8cea" />
        <path d="M13 37 h11 v3 h-11z M26 25 h11 v3 h-11z M39 7 h11 v3 h-11z M52 18 h11 v3 h-11z" fill="#fff" opacity=".4" />
      </>
    ),
  },
  {
    name: "keynote",
    art: (
      <>
        <path d="M34 30 h4 v34 h-4z" fill="#c5cdd4" /><ellipse cx="36" cy="65" rx="14" ry="5" fill="#c9d9e8" />
        <path d="M11 5 H60 L65 30 H7z" fill="#2d9fe6" /><path d="M7 29 H65 V32 H7z" fill="#1671b3" />
        <path d="M18 9 H53 L55 26 H17z" fill="#f7f9fb" /><circle cx="28" cy="19" r="6" fill="#e5398d" /><path d="M28 19 v-6 a6 6 0 0 1 0 12z" fill="#8fd13b" />
        <path d="M37 15 h14 M37 19 h14 M37 23 h14" stroke="#9ab" strokeWidth="1" />
      </>
    ),
  },
  {
    name: "itunes",
    art: (
      <>
        <circle cx="36" cy="36" r="32" fill="url(#gItunes)" /><circle cx="36" cy="36" r="28.5" fill="#f7f7fa" />
        <path d="M28 21 L50 16 V46 a6 5.500 0 1 1 -4 -5 V26 L32 29 V51 a6 5.500 0 1 1 -4 -5z" fill="url(#gNote)" />
      </>
    ),
  },
  {
    name: "appstore",
    art: (
      <>
        <circle cx="36" cy="36" r="32" fill="#e9eef2" /><circle cx="36" cy="36" r="29.5" fill="url(#gBlue)" />
        <path d="M34 16 L51 50 M38 16 L21 50 M14 38 H58" stroke="#fff" strokeWidth="5" strokeLinecap="round" />
        <circle cx="60" cy="13" r="14" fill="#f03f3b" />
        <text x="55.5" y="19" fontSize="17" fontFamily="Inter" fill="#fff">5</text>
      </>
    ),
  },
  {
    name: "preferences",
    art: (
      <>
        <rect x="4" y="7" width="64" height="59" rx="4" fill="url(#gPref)" />
        <circle cx="36" cy="37" r="25" fill="#2b2c2e" />
        <path d={ticks(30, 20, 24)} transform="translate(0 1)" stroke="#b8b8b8" strokeWidth="2.5" />
        <circle cx="36" cy="37" r="18" fill="none" stroke="#b8b8b8" strokeWidth="5" />
        <path d="M36 37 L54 37 M36 37 L27 21 M36 37 L27 53" stroke="#b8b8b8" strokeWidth="4" /><circle cx="36" cy="37" r="6" fill="#555" stroke="#b8b8b8" strokeWidth="2.5" />
      </>
    ),
  },
  {
    name: "terminal",
    running: true,
    art: (
      <>
        <rect x="4" y="8" width="64" height="56" rx="4" fill="#a7abad" /><rect x="6" y="10" width="60" height="52" rx="3" fill="#111" /><rect x="9" y="13" width="54" height="46" fill="#2f2f2f" />
        <text x="12" y="28" fontSize="16" fontFamily="Liberation Mono" fontWeight="bold" fill="#f4f4f4">&gt;_</text>
      </>
    ),
  },
  {
    name: "chrome",
    running: true,
    art: (
      <>
        <circle cx="36" cy="36" r="34" fill="#fbc846" />
        <path d="M6.500 19 A34 34 0 0 1 65.500 20 L36 20 L22 44z" fill="#d9493c" />
        <path d="M6.500 19 A34 34 0 0 0 36 70 L50 44 L36 52 L22 44z" fill="#23a05d" />
        <circle cx="36" cy="36" r="16" fill="#fff" /><circle cx="36" cy="36" r="12.5" fill="#4a8af0" />
      </>
    ),
  },
  { name: "powerpoint", running: true, art: PptFace },
  { name: "skype", running: true, art: SkypeFace },
  {
    name: "textedit",
    running: true,
    art: (
      <>
        <path d="M6 10 L55 3 L63 61 L14 69z" fill="#f8f8f8" />
        <path d="M9 18 L55 11 M10 24 L56 17 M11 30 L57 23 M12 36 L58 29 M13 42 L59 35 M14 48 L60 41 M14 54 L61 47 M15 60 L62 53" stroke="#b9c3cc" strokeWidth="1" />
        <path d="M14 9 L22 68" stroke="#eea6a6" strokeWidth="1" />
        <path d="M57 3 L62 5 L46 60 L41 68 L42 58z" fill="#9db4c6" stroke="#5d7282" strokeWidth=".8" />
      </>
    ),
  },
  { name: "preview", running: true, art: PreviewFace },
];

function WindowThumb({ tint, children, badge, tall }: { tint: string; children: React.ReactNode; badge: React.ReactNode; tall?: boolean }) {
  return (
    <svg viewBox="0 0 72 72" className={box}>
      <rect x="1" y={tall ? 9 : 17} width="70" height={tall ? 55 : 40} fill="#fafafa" />
      <rect x="1" y={tall ? 9 : 17} width="70" height="3" fill={tint} />
      {children}
      <g transform="translate(45 46) scale(.36)">{badge}</g>
    </svg>
  );
}

function Dock() {
  return (
    <div className="flex h-[98px] bg-[linear-gradient(90deg,#0c110d,#11160f_50%,#0a0f0b)] pt-[2px]">
      <svg className="absolute h-0 w-0">
        <defs>
          <linearGradient id="gFinder" x1="0" y1="0" x2="0" y2="1"><stop offset="0" stopColor="#30c8f8" /><stop offset="1" stopColor="#2373f0" /></linearGradient>
          <linearGradient id="gLaunch" x1="0" y1="0" x2="0" y2="1"><stop offset="0" stopColor="#c9d3d8" /><stop offset="1" stopColor="#77787a" /></linearGradient>
          <linearGradient id="gBlue" x1="0" y1="0" x2="0" y2="1"><stop offset="0" stopColor="#23bdf6" /><stop offset="1" stopColor="#1d66ec" /></linearGradient>
          <linearGradient id="gMsg" x1="0" y1="0" x2="0" y2="1"><stop offset="0" stopColor="#72cdfa" /><stop offset="1" stopColor="#1f8ef8" /></linearGradient>
          <linearGradient id="gGreen" x1="0" y1="0" x2="0" y2="1"><stop offset="0" stopColor="#5df777" /><stop offset="1" stopColor="#23cc35" /></linearGradient>
          <linearGradient id="gItunes" x1="0" y1="0" x2="1" y2="1"><stop offset="0" stopColor="#fb5b6b" /><stop offset=".5" stopColor="#b35cf0" /><stop offset="1" stopColor="#38c8f6" /></linearGradient>
          <linearGradient id="gNote" x1="0" y1="0" x2="0" y2="1"><stop offset="0" stopColor="#f6485c" /><stop offset=".6" stopColor="#a45be8" /><stop offset="1" stopColor="#3d95f3" /></linearGradient>
          <linearGradient id="gPref" x1="0" y1="0" x2="0" y2="1"><stop offset="0" stopColor="#cfdbe2" /><stop offset="1" stopColor="#7d7f81" /></linearGradient>
        </defs>
      </svg>
      <div className="ml-[60px] flex h-[96px] w-[2440px] rounded-t-[9px] bg-[linear-gradient(90deg,#5a5c54,#5e5b56_25%,#565b53_45%,#575b54_65%,#5e5b55_85%,#5a5c54)] pl-[6px]">
        {apps.map((a) => (
          <div key={a.name} className="flex w-[77.2px] shrink-0 flex-col items-center pt-[8px]">
            <svg viewBox="0 0 72 72" className={box}>{a.art}</svg>
            {a.running && <span className="mt-[3px] h-[8px] w-[8px] rounded-full bg-black" />}
          </div>
        ))}
        <div className="mt-[12px] mr-[16px] ml-[18px] h-[72px] w-[2px] shrink-0 bg-[#3a3c37]" />
        <div className="flex pt-[8px]">
          <div className="flex w-[77.2px] justify-center">
            <svg viewBox="0 0 72 72" className={box}>
              <path d="M7 15 H62 V48 H7z M10 11 H60 V48 H10z" fill="#e8e8e8" stroke="#999" strokeWidth=".6" />
              <path d="M14 9 H44 L57 32 V70 H14z" fill="#fbfbfb" stroke="#bbb" strokeWidth=".8" />
              <path d="M38 9 Q40 30 57 32 Q50 14 38 9z" fill="#ddd" />
              <path d="M18 14 h14 M18 18 h16 M18 22 h18 M18 30 h30 M18 34 h34 M18 38 h34 M18 42 h30 M18 50 h34" stroke="#aaa" strokeWidth="1.2" />
              <text x="26" y="67" fontSize="12" fontFamily="Inter" fill="#888">PDF</text>
            </svg>
          </div>
          <div className="flex w-[77.2px] justify-center">
            <WindowThumb tint="#c8492d" badge={PptFace}>
              <path d="M1 20 h70 v5 h-70z M1 25 h10 v32 h-10z" fill="#e9e6e4" /><path d="M24 26 h34 v26 h-34z" fill="#fff" stroke="#ddd" strokeWidth=".6" /><path d="M24 26 h4 v26 h-4z" fill="#e7cd92" />
              <path d="M31 30 h12 M31 34 h20 M33 37 h20 M33 40 h18 M33 43 h20" stroke="#777" strokeWidth="1" />
            </WindowThumb>
          </div>
          <div className="flex w-[77.2px] justify-center">
            <WindowThumb tint="#c9c9c9" badge={SkypeFace}>
              <path d="M1 20 h11 v37 h-11z" fill="#eaf1f6" /><circle cx="43" cy="37" r="1.2" fill="#5bb8e8" /><path d="M3 24 h3 M3 29 h3 M3 34 h3" stroke="#5bb8e8" strokeWidth="1.2" />
            </WindowThumb>
          </div>
          <div className="flex w-[77.2px] justify-center">
            <WindowThumb tall tint="#d5d5d5" badge={PreviewFace}>
              <path d="M1 12 h70 v8 h-70z M1 20 h16 v44 h-16z" fill="#e4e4e4" />
              <path d="M26 28 h36 M26 31 h36 M26 34 h36 M34 38 h28 M34 41 h28 M26 46 h36 M26 49 h36 M26 52 h36 M26 55 h30 M4 30 h10 M4 38 h10 M4 46 h10" stroke="#aaa" strokeWidth="1" />
              <path d="M28 37 l3 5 M29 42 l2 -4" stroke="#d33" strokeWidth="1.2" />
            </WindowThumb>
          </div>
          <div className="flex w-[77.2px] justify-center">
            <WindowThumb tint="#cfcfcf" badge={FinderFace}>
              <path d="M1 20 h12 v37 h-12z" fill="#e6e6e6" />
              <path d="M19 23 h2 v4 h-2z M29 23 h2 v4 h-2z M39 23 h2 v4 h-2z M49 23 h2 v4 h-2z M59 23 h2 v4 h-2z M19 32 h2 v4 h-2z M29 32 h2 v4 h-2z M39 32 h2 v4 h-2z M49 32 h2 v4 h-2z M19 42 h2 v4 h-2z M29 42 h2 v4 h-2z" fill="#999" />
              <path d="M4 31 h2 M4 35 h2 M4 39 h2 M4 43 h2" stroke="#e58a3a" strokeWidth="2" />
            </WindowThumb>
          </div>
          <div className="flex w-[77.2px] justify-center">
            <WindowThumb tint="#cfcfcf" badge={FinderFace}>
              <path d="M1 20 h17 v37 h-17z" fill="#e6e6e6" />
              <path d="M21 28 h6 v4 h-6z M35 28 h6 v4 h-6z M48 26 h6 v4 h-6z" fill="#6cc4ee" />
              <path d="M4 35 h2 M4 39 h2 M4 43 h2 M4 47 h2" stroke="#e5503a" strokeWidth="2" />
            </WindowThumb>
          </div>
          <div className="flex w-[77.2px] justify-center">
            <svg viewBox="0 0 72 72" className={box}>
              <path d="M14 12 L22 3 L32 5 L38 2 L48 5 L56 12 L54 20 H16z" fill="#dedede" />
              <path d="M18 12 L26 6 L30 14z M40 6 L50 12 L42 16z" fill="#2f3335" /><path d="M26 10 l8 -2 l4 8 h-10z" fill="#3fa3a3" /><path d="M44 8 l8 4 l-4 4z" fill="#c75a4a" />
              <path d="M9 8 L16 64 Q36 74 56 64 L62 8 Q60 16 36 17 Q12 16 9 8z" fill="#e8e8e6" opacity=".88" />
              <path d="M18 22 L24 66 M30 22 L32 68 M42 22 L40 68 M54 22 L48 66" stroke="#cfcfcc" strokeWidth="1.5" opacity=".7" />
              <path d="M9 8 Q14 17 36 17 Q58 17 62 8" fill="none" stroke="#fff" strokeWidth="1.5" />
            </svg>
          </div>
        </div>
      </div>
    </div>
  );
}

export default function App() {
  return (
    <div className="flex h-[1600px] w-[2560px] flex-col overflow-hidden bg-[#0c110d]">
      <MenuBar />
      <div className="bg-[#4c525b] pt-[2px]">
        <TabStrip />
      </div>
      <Toolbar />
      <Page />
      <Dock />
    </div>
  );
}
